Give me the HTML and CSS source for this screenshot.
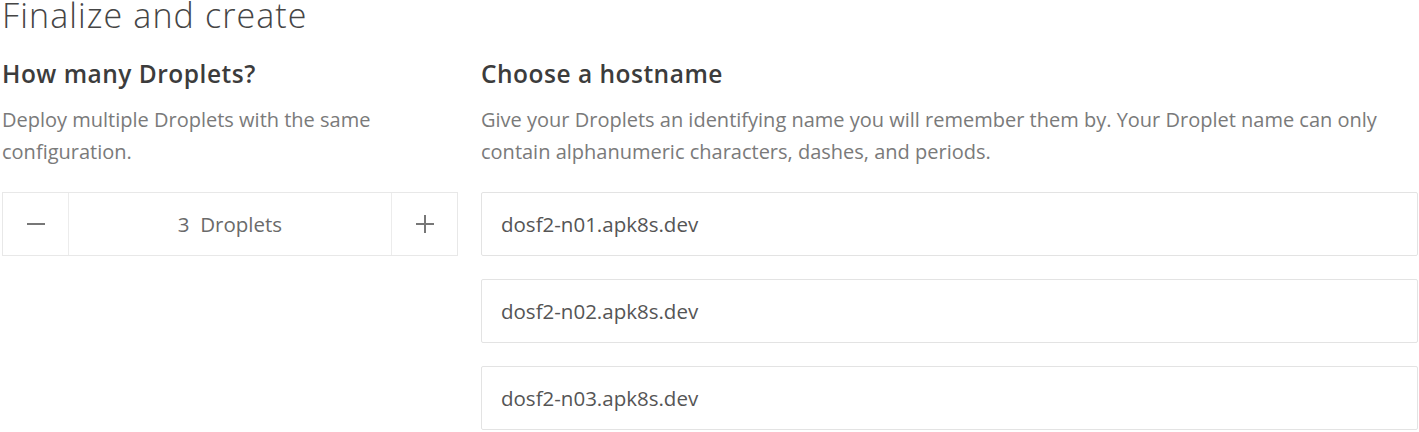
FILE: index.html
```html
<!DOCTYPE html>
<html>
<head>
<meta charset="utf-8">
<link rel="stylesheet" href="styles.css">
</head>
<body>
<div class="page">
  <h1 class="title">Finalize and create</h1>
  <div class="cols">
    <section class="col-left">
      <h2 class="heading">How many Droplets?</h2>
      <p class="desc">Deploy multiple Droplets with the same configuration.</p>
      <div class="stepper">
        <button class="step-btn" aria-label="decrease">
          <svg width="20" height="20" viewBox="0 0 20 20"><path d="M1 10h18" stroke="#777" stroke-width="2"/></svg>
        </button>
        <div class="step-value">3&nbsp; Droplets</div>
        <button class="step-btn" aria-label="increase">
          <svg width="20" height="20" viewBox="0 0 20 20"><path d="M1 10h18M10 1v18" stroke="#777" stroke-width="2"/></svg>
        </button>
      </div>
    </section>
    <section class="col-right">
      <h2 class="heading">Choose a hostname</h2>
      <p class="desc">Give your Droplets an identifying name you will remember them by. Your Droplet name can only contain alphanumeric characters, dashes, and periods.</p>
      <div class="hosts">
        <div class="host">dosf2-n01.apk8s.dev</div>
        <div class="host">dosf2-n02.apk8s.dev</div>
        <div class="host">dosf2-n03.apk8s.dev</div>
      </div>
    </section>
  </div>
</div>
</body>
</html>
```
FILE: styles.css
```css
html, body {
  margin: 0;
  padding: 0;
  background: #fff;
}
.page {
  font-family: "Open Sans", "Liberation Sans", sans-serif;
  padding: 0 1px 0 2px;
}
.title {
  margin: -2px 0 0;
  font-size: 34px;
  font-weight: 300;
  letter-spacing: 1.1px;
  color: #454545;
  line-height: 34px;
}
.cols {
  display: flex;
  gap: 23px;
  margin-top: 27px;
}
.col-left {
  width: 456px;
  flex: none;
}
.col-right {
  flex: 1;
}
.heading {
  margin: 0;
  font-size: 24.5px;
  font-weight: 600;
  letter-spacing: 0.5px;
  color: #3c3c3c;
  line-height: 30px;
}
.desc {
  margin: 15px 0 0;
  font-size: 20px;
  line-height: 32px;
  color: #7a7a7a;
}
.stepper {
  margin-top: 24px;
  height: 64px;
  box-sizing: border-box;
  border: 1px solid #e8e8e8;
  display: flex;
}
.step-btn {
  width: 66px;
  flex: none;
  border: none;
  background: #fff;
  padding: 0;
  display: flex;
  align-items: center;
  justify-content: center;
}
.step-btn:first-child {
  border-right: 1px solid #ececec;
}
.step-btn:last-child {
  border-left: 1px solid #ececec;
}
.step-value {
  flex: 1;
  display: flex;
  align-items: center;
  justify-content: center;
  font-size: 20.5px;
  color: #6a6a6a;
}
.hosts {
  margin-top: 24px;
  display: flex;
  flex-direction: column;
  gap: 23px;
}
.host {
  height: 64px;
  box-sizing: border-box;
  border: 1px solid #e3e3e3;
  border-radius: 2px;
  padding-left: 19px;
  display: flex;
  align-items: center;
  font-size: 20.5px;
  color: #555;
}
```
